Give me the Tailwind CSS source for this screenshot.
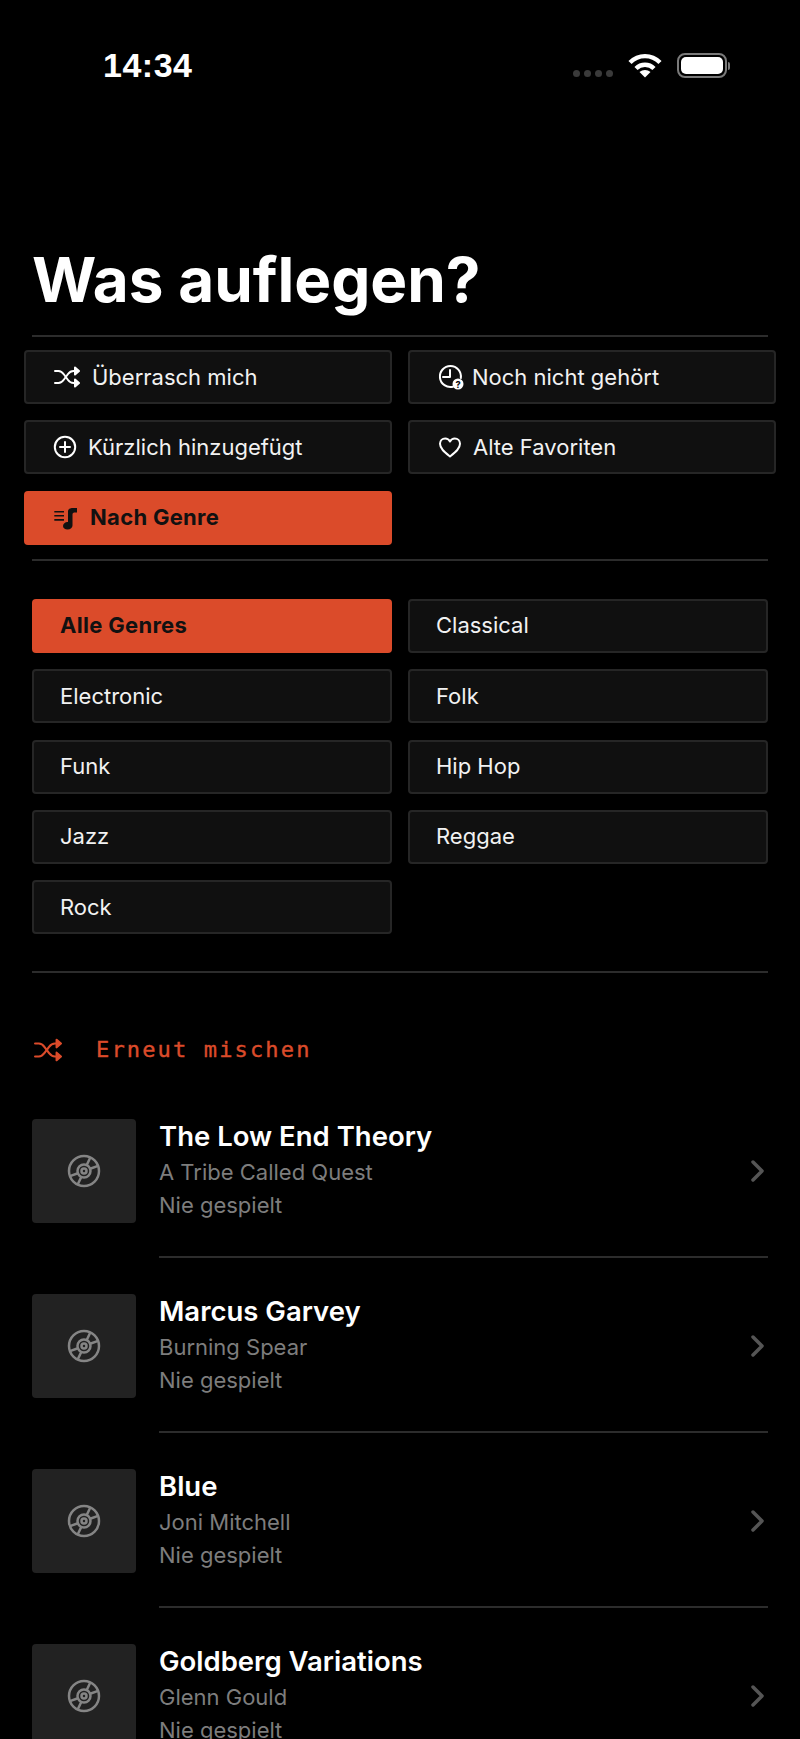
<!DOCTYPE html>
<html lang="de">
<head>
    <meta charset="UTF-8">
    <meta name="viewport" content="width=device-width, initial-scale=1.0">
    <title>Was auflegen?</title>
    <script src="https://cdn.jsdelivr.net/npm/@tailwindcss/browser@4"></script>
</head>
<body class="bg-black">
    <div class="w-[800px] h-[1739px] overflow-hidden bg-black text-white font-['Inter',sans-serif]">
        <!-- Status bar -->
        <div class="h-[130px] flex items-start justify-between pt-[45px] pl-[103px] pr-[70px]">
            <span class="font-['Liberation_Sans',sans-serif] font-bold text-[34px] leading-[40px] tracking-[0.5px]">14:34</span>
            <div class="flex items-center gap-[15px] mt-[8px]">
                <div class="flex gap-[4px] mt-[16px]">
                    <span class="w-[7px] h-[7px] rounded-full bg-[#3a3a3a]"></span>
                    <span class="w-[7px] h-[7px] rounded-full bg-[#3a3a3a]"></span>
                    <span class="w-[7px] h-[7px] rounded-full bg-[#3a3a3a]"></span>
                    <span class="w-[7px] h-[7px] rounded-full bg-[#3a3a3a]"></span>
                </div>
                <svg class="w-[34px] h-[25px]" viewBox="0 0 34 25" fill="none" stroke="white" stroke-width="4.4">
                    <path d="M2 9.500C10.500 1 23.500 1 32 9.500"/>
                    <path d="M8 15.500C13 10.500 21 10.500 26 15.500"/>
                    <path d="M17 24.500L11.500 19C14.500 16.200 19.500 16.200 22.500 19Z" fill="white" stroke="none"/>
                </svg>
                <div class="flex items-center gap-[1px]">
                    <div class="w-[50px] h-[25px] rounded-[8px] border-2 border-[#7a7a7a] p-[2px]">
                        <div class="w-full h-full rounded-[5px] bg-white"></div>
                    </div>
                    <div class="w-[2px] h-[8px] rounded-r-full bg-[#7a7a7a]"></div>
                </div>
            </div>
        </div>

        <!-- Heading -->
        <div class="px-8 pt-[112px]">
            <h1 class="text-[62px] leading-[75px] font-bold h-[93px]">Was auflegen?</h1>
            <div class="h-[2px] bg-[#2c2c2c]"></div>
        </div>

        <!-- Modes -->
        <div class="grid grid-cols-2 gap-x-4 gap-y-[16.400px] px-6 pt-[13px]">
            <button class="h-[54px] flex items-center pl-[28px] rounded-[4px] bg-[#101010] border-2 border-[#262626] text-[22px] text-[#f2f2f2]">
                <svg class="w-[26px] h-[26px] mr-[12px]" viewBox="0 0 26 26" fill="none" stroke="white" stroke-width="2" stroke-linecap="round" stroke-linejoin="round">
                    <path d="M1 7H4.500C7 7 8.500 8.500 10 10.500L14 16C15.500 18 17 19 19.500 19H22"/>
                    <path d="M1 19H4.500C7 19 8.500 17.500 10 15.500L14 10C15.500 8 17 7 19.500 7H22"/>
                    <path d="M21 3.500L25 7L21 10.500Z" fill="white"/>
                    <path d="M21 15.500L25 19L21 22.500Z" fill="white"/>
                </svg>
                Überrasch mich
            </button>
            <button class="h-[54px] flex items-center pl-[28px] rounded-[4px] bg-[#101010] border-2 border-[#262626] text-[22px] text-[#f2f2f2]">
                <svg class="w-[26px] h-[26px] mr-[8px]" viewBox="0 0 26 26" fill="none" stroke="white" stroke-width="2" stroke-linecap="round" stroke-linejoin="round">
                    <path d="M15 22.700A10.500 10.500 0 1 1 22.800 14"/>
                    <path d="M12 6V13H5"/>
                    <circle cx="20" cy="20" r="5.500" fill="white" stroke="none"/>
                    <text x="20" y="23.500" text-anchor="middle" font-size="9" font-weight="800" fill="#111111" stroke="none">?</text>
                </svg>
                Noch nicht gehört
            </button>
            <button class="h-[54px] flex items-center pl-[26px] rounded-[4px] bg-[#101010] border-2 border-[#262626] text-[22px] text-[#f2f2f2]">
                <svg class="w-[26px] h-[26px] mr-[10px]" viewBox="0 0 26 26" fill="none" stroke="white" stroke-width="2" stroke-linecap="round">
                    <circle cx="13" cy="13" r="10.200"/>
                    <path d="M13 8V18M8 13H18"/>
                </svg>
                Kürzlich hinzugefügt
            </button>
            <button class="h-[54px] flex items-center pl-[27px] rounded-[4px] bg-[#101010] border-2 border-[#262626] text-[22px] text-[#f2f2f2]">
                <svg class="w-[26px] h-[26px] mr-[10px]" viewBox="0 0 26 26" fill="none" stroke="white" stroke-width="2" stroke-linejoin="round">
                    <path d="M13 22.500C7.500 18 3 14.500 3 9.800C3 6.500 5.300 4.500 8.200 4.500C10.200 4.500 12 5.600 13 7.500C14 5.600 15.800 4.500 17.800 4.500C20.700 4.500 23 6.500 23 9.800C23 14.500 18.500 18 13 22.500Z"/>
                </svg>
                Alte Favoriten
            </button>
            <button class="h-[54px] flex items-center pl-[30px] rounded-[4px] bg-[#db4b2a] text-[#111111] font-bold text-[22px] tracking-[0.3px]">
                <svg class="w-[24px] h-[24px] mr-[12px]" viewBox="0 0 24 24" fill="#111111">
                    <path d="M0.300 5H10V6.500H0.300ZM0.300 9H10V10.500H0.300ZM0.300 13H10V14.700H0.300Z"/>
                    <path d="M14 5C14 3 16 2 20 2H23V6.500H21C19.500 6.500 18.500 7 18.500 8.500V19.500C18.500 21.500 16.500 23.500 13.500 23.500C11 23.500 9 22 9 20C9 17.700 11.200 16 13.500 16H14Z"/>
                </svg>
                Nach Genre
            </button>
        </div>

        <div class="px-8 pt-[14px]">
            <div class="h-[2px] bg-[#2c2c2c]"></div>
        </div>

        <!-- Genres -->
        <div class="grid grid-cols-2 gap-x-4 gap-y-[16.400px] px-8 pt-[38px]">
            <button class="h-[54px] flex items-center pl-[28px] rounded-[4px] bg-[#db4b2a] text-[#111111] font-bold text-[22px] tracking-[0.3px]">Alle Genres</button>
            <button class="h-[54px] flex items-center pl-[26px] rounded-[4px] bg-[#101010] border-2 border-[#262626] text-[22px] text-[#f2f2f2]">Classical</button>
            <button class="h-[54px] flex items-center pl-[26px] rounded-[4px] bg-[#101010] border-2 border-[#262626] text-[22px] text-[#f2f2f2]">Electronic</button>
            <button class="h-[54px] flex items-center pl-[26px] rounded-[4px] bg-[#101010] border-2 border-[#262626] text-[22px] text-[#f2f2f2]">Folk</button>
            <button class="h-[54px] flex items-center pl-[26px] rounded-[4px] bg-[#101010] border-2 border-[#262626] text-[22px] text-[#f2f2f2]">Funk</button>
            <button class="h-[54px] flex items-center pl-[26px] rounded-[4px] bg-[#101010] border-2 border-[#262626] text-[22px] text-[#f2f2f2]">Hip Hop</button>
            <button class="h-[54px] flex items-center pl-[26px] rounded-[4px] bg-[#101010] border-2 border-[#262626] text-[22px] text-[#f2f2f2]">Jazz</button>
            <button class="h-[54px] flex items-center pl-[26px] rounded-[4px] bg-[#101010] border-2 border-[#262626] text-[22px] text-[#f2f2f2]">Reggae</button>
            <button class="h-[54px] flex items-center pl-[26px] rounded-[4px] bg-[#101010] border-2 border-[#262626] text-[22px] text-[#f2f2f2]">Rock</button>
        </div>

        <div class="px-8 pt-[37px]">
            <div class="h-[2px] bg-[#2c2c2c]"></div>
        </div>

        <!-- Reshuffle -->
        <div class="flex items-center pl-[34px] pt-[63px] text-[#db4b2a]">
            <svg class="w-[28px] h-[28px] mr-[34px]" viewBox="0 0 26 26" fill="none" stroke="#db4b2a" stroke-width="2" stroke-linecap="round" stroke-linejoin="round">
                <path d="M1 7H4.500C7 7 8.500 8.500 10 10.500L14 16C15.500 18 17 19 19.500 19H22"/>
                <path d="M1 19H4.500C7 19 8.500 17.500 10 15.500L14 10C15.500 8 17 7 19.500 7H22"/>
                <path d="M21 3.500L25 7L21 10.500Z" fill="#db4b2a"/>
                <path d="M21 15.500L25 19L21 22.500Z" fill="#db4b2a"/>
            </svg>
            <span class="font-['DejaVu_Sans_Mono',monospace] text-[22px] leading-[28px] tracking-[2.150px] [-webkit-text-stroke:0.4px_#db4b2a]">Erneut mischen</span>
        </div>

        <!-- Album list -->
        <div class="pt-[55px]">
            <div class="flex h-[175px] pl-8">
                <div class="w-[104px] h-[104px] rounded-[4px] bg-[#222222] flex items-center justify-center shrink-0">
                    <svg class="w-[34px] h-[34px]" viewBox="0 0 34 34" fill="none" stroke="#858585" stroke-width="2.500">
                        <circle cx="17" cy="17" r="15"/>
                        <circle cx="17" cy="17" r="6.500"/>
                        <circle cx="17" cy="17" r="2.500"/>
                        <path d="M19.750 11.100L23.300 3.400M23.100 14.800L31.100 11.900M14.250 22.900L10.700 30.600M10.900 19.200L2.900 22.100"/>
                    </svg>
                </div>
                <div class="ml-[23px] mr-8 flex-1 border-b-2 border-[#2c2c2c] h-[139px] flex items-start justify-between">
                    <div>
                        <div class="text-[27.500px] leading-[35px] mb-[2px] font-semibold">The Low End Theory</div>
                        <div class="text-[22px] leading-[33px] text-[#7d7d7d]">A Tribe Called Quest</div>
                        <div class="text-[22px] leading-[32px] text-[#7d7d7d]">Nie gespielt</div>
                    </div>
                    <svg class="w-[16px] h-[24px] mt-[40px] mr-[3px]" viewBox="0 0 16 24" fill="none" stroke="#555555" stroke-width="3.500" stroke-linecap="round" stroke-linejoin="round"><path d="M4 3L13 12L4 21"/></svg>
                </div>
            </div>
            <div class="flex h-[175px] pl-8">
                <div class="w-[104px] h-[104px] rounded-[4px] bg-[#222222] flex items-center justify-center shrink-0">
                    <svg class="w-[34px] h-[34px]" viewBox="0 0 34 34" fill="none" stroke="#858585" stroke-width="2.500">
                        <circle cx="17" cy="17" r="15"/>
                        <circle cx="17" cy="17" r="6.500"/>
                        <circle cx="17" cy="17" r="2.500"/>
                        <path d="M19.750 11.100L23.300 3.400M23.100 14.800L31.100 11.900M14.250 22.900L10.700 30.600M10.900 19.200L2.900 22.100"/>
                    </svg>
                </div>
                <div class="ml-[23px] mr-8 flex-1 border-b-2 border-[#2c2c2c] h-[139px] flex items-start justify-between">
                    <div>
                        <div class="text-[27.500px] leading-[35px] mb-[2px] font-semibold">Marcus Garvey</div>
                        <div class="text-[22px] leading-[33px] text-[#7d7d7d]">Burning Spear</div>
                        <div class="text-[22px] leading-[32px] text-[#7d7d7d]">Nie gespielt</div>
                    </div>
                    <svg class="w-[16px] h-[24px] mt-[40px] mr-[3px]" viewBox="0 0 16 24" fill="none" stroke="#555555" stroke-width="3.500" stroke-linecap="round" stroke-linejoin="round"><path d="M4 3L13 12L4 21"/></svg>
                </div>
            </div>
            <div class="flex h-[175px] pl-8">
                <div class="w-[104px] h-[104px] rounded-[4px] bg-[#222222] flex items-center justify-center shrink-0">
                    <svg class="w-[34px] h-[34px]" viewBox="0 0 34 34" fill="none" stroke="#858585" stroke-width="2.500">
                        <circle cx="17" cy="17" r="15"/>
                        <circle cx="17" cy="17" r="6.500"/>
                        <circle cx="17" cy="17" r="2.500"/>
                        <path d="M19.750 11.100L23.300 3.400M23.100 14.800L31.100 11.900M14.250 22.900L10.700 30.600M10.900 19.200L2.900 22.100"/>
                    </svg>
                </div>
                <div class="ml-[23px] mr-8 flex-1 border-b-2 border-[#2c2c2c] h-[139px] flex items-start justify-between">
                    <div>
                        <div class="text-[27.500px] leading-[35px] mb-[2px] font-semibold">Blue</div>
                        <div class="text-[22px] leading-[33px] text-[#7d7d7d]">Joni Mitchell</div>
                        <div class="text-[22px] leading-[32px] text-[#7d7d7d]">Nie gespielt</div>
                    </div>
                    <svg class="w-[16px] h-[24px] mt-[40px] mr-[3px]" viewBox="0 0 16 24" fill="none" stroke="#555555" stroke-width="3.500" stroke-linecap="round" stroke-linejoin="round"><path d="M4 3L13 12L4 21"/></svg>
                </div>
            </div>
            <div class="flex h-[175px] pl-8">
                <div class="w-[104px] h-[104px] rounded-[4px] bg-[#222222] flex items-center justify-center shrink-0">
                    <svg class="w-[34px] h-[34px]" viewBox="0 0 34 34" fill="none" stroke="#858585" stroke-width="2.500">
                        <circle cx="17" cy="17" r="15"/>
                        <circle cx="17" cy="17" r="6.500"/>
                        <circle cx="17" cy="17" r="2.500"/>
                        <path d="M19.750 11.100L23.300 3.400M23.100 14.800L31.100 11.900M14.250 22.900L10.700 30.600M10.900 19.200L2.900 22.100"/>
                    </svg>
                </div>
                <div class="ml-[23px] mr-8 flex-1 h-[139px] flex items-start justify-between">
                    <div>
                        <div class="text-[27.500px] leading-[35px] mb-[2px] font-semibold">Goldberg Variations</div>
                        <div class="text-[22px] leading-[33px] text-[#7d7d7d]">Glenn Gould</div>
                        <div class="text-[22px] leading-[32px] text-[#7d7d7d]">Nie gespielt</div>
                    </div>
                    <svg class="w-[16px] h-[24px] mt-[40px] mr-[3px]" viewBox="0 0 16 24" fill="none" stroke="#555555" stroke-width="3.500" stroke-linecap="round" stroke-linejoin="round"><path d="M4 3L13 12L4 21"/></svg>
                </div>
            </div>
        </div>
    </div>
</body>
</html>
